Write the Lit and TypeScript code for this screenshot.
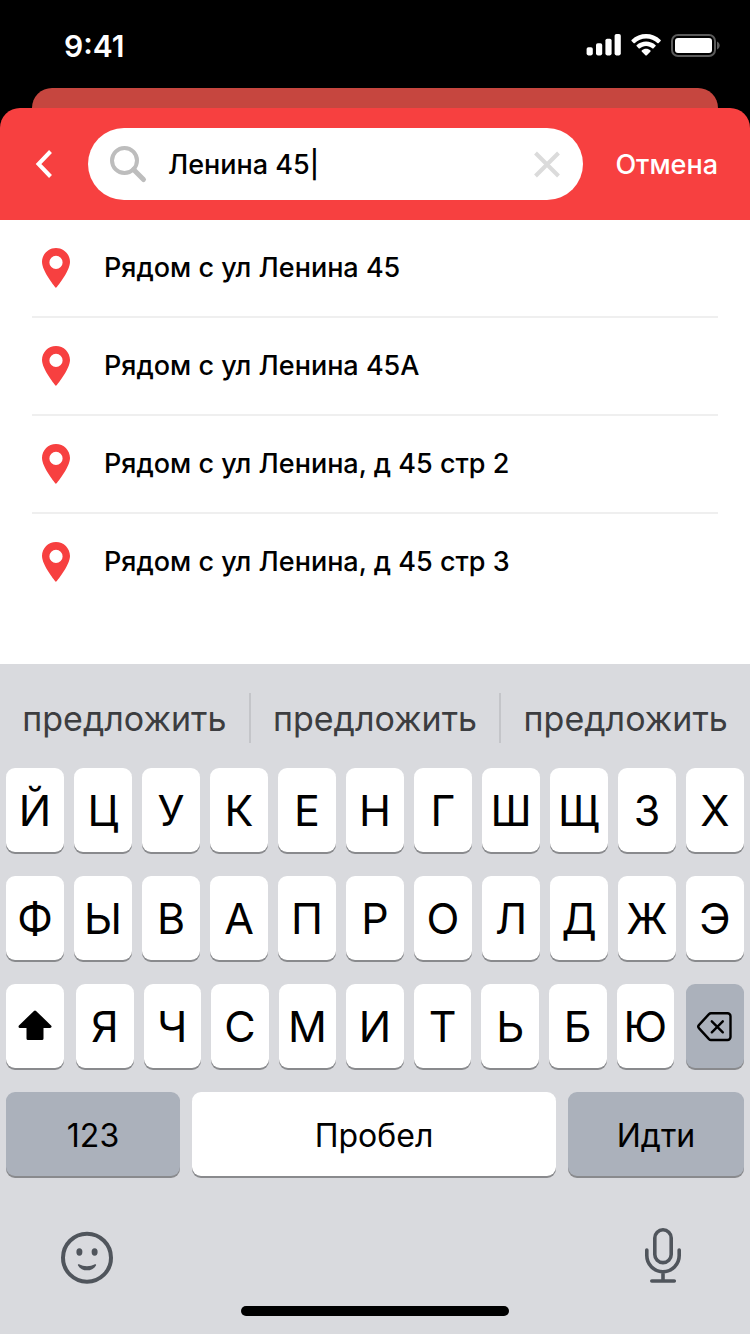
import { LitElement, html, css, svg } from "lit";
import { customElement, property, state } from "lit/decorators.js";
import { classMap } from "lit/directives/class-map.js";

@customElement("status-bar")
class StatusBar extends LitElement {
  static styles = css`
    :host {
      display: flex;
      align-items: center;
      justify-content: space-between;
      height: 88px;
      padding: 3px 30px 0 64px;
      box-sizing: border-box;
      color: #fff;
    }
    .time {
      font-size: 30px;
      line-height: 36px;
      font-weight: 600;
    }
    .indicators {
      display: block;
    }
  `;

  render() {
    return html`
      <span class="time">9:41</span>
      <svg class="indicators" width="134" height="24" viewBox="0 0 134 24" fill="#fff" aria-hidden="true">
        <rect x="0.6" y="13.2" width="6.2" height="8.2" rx="1.8" />
        <rect x="10" y="9.2" width="6.2" height="12.2" rx="1.8" />
        <rect x="19.4" y="4.8" width="6.2" height="16.6" rx="1.8" />
        <rect x="28.6" y="0" width="6.2" height="21.4" rx="1.8" />
        <path d="M60.1 4.6c4.3 0 8.4 1.7 11.5 4.6.25.2.6.2.85 0l2.2-2.3c.25-.25.25-.65 0-.9-8.1-7.9-21-7.9-29.1 0-.25.25-.25.65 0 .9l2.2 2.3c.25.2.6.2.85 0 3.1-2.9 7.2-4.6 11.5-4.6z" />
        <path d="M60.1 11.9c2.4 0 4.6.9 6.4 2.5.25.25.6.25.85 0l2.3-2.3c.25-.25.25-.65 0-.9-5.4-5-13.7-5-19.1 0-.25.25-.25.65 0 .9l2.3 2.3c.25.25.6.25.85 0 1.8-1.6 4-2.5 6.4-2.5z" />
        <path d="M64.5 17.4c.25-.25.25-.65 0-.9-2.5-2.2-6.3-2.2-8.8 0-.25.25-.25.65 0 .9l3.9 4c.25.25.75.25 1 0z" />
        <rect x="86" y="1" width="43" height="21" rx="6" fill="none" stroke="#5b5b5b" stroke-width="2" />
        <rect x="89" y="4" width="37" height="15" rx="3" />
        <path d="M131 7.5v8c1.6-.7 2.7-2.2 2.7-4s-1.100-3.300-2.700-4z" fill="#5b5b5b" />
      </svg>
    `;
  }
}

@customElement("search-header")
class SearchHeader extends LitElement {
  @property() query = "";

  static styles = css`
    :host {
      display: block;
    }
    .behind {
      height: 20px;
      margin: 0 32px;
      border-radius: 20px 20px 0 0;
      background: #c6463f;
    }
    .bar {
      display: flex;
      align-items: center;
      padding: 20px 32px;
      border-radius: 20px 20px 0 0;
      background: #f74040;
    }
    button {
      display: block;
      margin: 0;
      padding: 0;
      border: 0;
      background: none;
      font: inherit;
      color: #fff;
      cursor: pointer;
    }
    svg {
      display: block;
    }
    .back {
      width: 24px;
      margin-right: 32px;
    }
    .field {
      display: flex;
      flex: 1;
      min-width: 0;
      align-items: center;
      height: 72px;
      box-sizing: border-box;
      padding: 0 20px;
      border-radius: 36px;
      background: #fff;
    }
    .text {
      flex: 1;
      min-width: 0;
      height: 40px;
      margin: 0 16px 0 20px;
      padding: 0;
      border: 0;
      outline: 0;
      background: none;
      color: #000;
      font: inherit;
      font-size: 27px;
      font-weight: 500;
    }
    .cancel {
      margin: 2px 0 0 32px;
      font-size: 27px;
      line-height: 36px;
      font-weight: 500;
    }
  `;

  private change(query: string) {
    this.dispatchEvent(new CustomEvent("query-change", { detail: query }));
  }

  render() {
    return html`
      <div class="behind"></div>
      <header class="bar">
        <button class="back" aria-label="Назад">
          <svg width="24" height="32" viewBox="0 0 24 32" fill="none" stroke="#fff" stroke-width="4">
            <path d="M18.5 3.5 6.5 16l12 12.500" />
          </svg>
        </button>
        <label class="field">
          <svg width="40" height="40" viewBox="0 0 40 40" fill="none" stroke="#bdbdbd">
            <circle cx="16.5" cy="16.5" r="12.5" stroke-width="4" />
            <path d="m25.500 25.500 10 10" stroke-width="5" stroke-linecap="round" />
          </svg>
          <input
            class="text"
            type="text"
            aria-label="Адрес"
            .value=${this.query}
            @input=${(e: Event) => this.change((e.target as HTMLInputElement).value)}
          />
          <button aria-label="Очистить" @click=${() => this.change("")}>
            <svg width="30" height="30" viewBox="0 0 30 30" stroke="#dbdbdb" stroke-width="4">
              <path d="m2.500 4 23 23m0-23-23 23" />
            </svg>
          </button>
        </label>
        <button class="cancel">Отмена</button>
      </header>
    `;
  }
}

@customElement("result-list")
class ResultList extends LitElement {
  @property({ attribute: false }) items: string[] = [];

  static styles = css`
    :host {
      display: block;
      background: #fff;
    }
    .list {
      margin: 0;
      padding: 0 32px;
      list-style: none;
    }
    .item + .item {
      border-top: 2px solid #efefef;
    }
    .link {
      display: flex;
      align-items: center;
      gap: 24px;
      height: 96px;
      color: #000;
      text-decoration: none;
      font-size: 27px;
      line-height: 32px;
      font-weight: 500;
    }
    .pin {
      flex: none;
    }
  `;

  render() {
    return html`
      <ul class="list">
        ${this.items.map(
          (item) => html`
            <li class="item">
              <a class="link" href="#">
                <svg class="pin" width="48" height="40" viewBox="0 0 48 40" aria-hidden="true">
                  <path
                    fill="#f74040"
                    fill-rule="evenodd"
                    d="M24 0C16.3 0 10 6.2 10 14c0 9.5 14 26 14 26s14-16.5 14-26C38 6.2 31.7 0 24 0zm0 7.8a6.6 6.6 0 1 1 0 13.2 6.6 6.6 0 0 1 0-13.2z"
                  />
                </svg>
                <span>${item}</span>
              </a>
            </li>
          `
        )}
      </ul>
    `;
  }
}

const shiftIcon = svg`
  <path d="M18 4 33 18.5H25V30.5H11V18.5H3z" fill="#000" stroke="#000" stroke-width="3" stroke-linejoin="round" />
`;

const deleteIcon = svg`
  <g fill="none" stroke="#000" stroke-width="2.4" stroke-linecap="round" stroke-linejoin="round">
    <path d="M14 5.200H30.500a3 3 0 0 1 3 3V29a3 3 0 0 1-3 3H14a3 3 0 0 1-2-.9L2.100 20.400a2.600 2.600 0 0 1 0-3.600L12 6.100a3 3 0 0 1 2-.9z" />
    <path d="m14.800 13.300 11 11m0-11-11 11" />
  </g>
`;

@customElement("screen-keyboard")
class ScreenKeyboard extends LitElement {
  static styles = css`
    :host {
      display: block;
      background: #d9dade;
      color: #000;
    }
    button {
      display: block;
      min-width: 0;
      margin: 0;
      padding: 0;
      border: 0;
      background: none;
      font: inherit;
      color: inherit;
      cursor: pointer;
    }
    svg {
      display: block;
    }
    .suggestions {
      display: flex;
      align-items: center;
      height: 104px;
      padding-top: 4px;
      box-sizing: border-box;
    }
    .suggestion {
      flex: 1;
      height: 50px;
      padding-top: 2px;
      font-size: 34px;
      line-height: 48px;
      color: #3c3d40;
    }
    .suggestion + .suggestion {
      border-left: 2px solid #c4c5c9;
    }
    .rows {
      display: flex;
      flex-direction: column;
      gap: 24px;
      padding: 0 6px;
    }
    .row {
      display: flex;
      gap: 10px;
    }
    .row.spaced {
      gap: 12px;
    }
    .letters {
      display: flex;
      flex: 598 1 0;
      gap: 10px;
    }
    .key {
      display: flex;
      flex: 1 1 0;
      align-items: center;
      justify-content: center;
      height: 84px;
      border-radius: 9px;
      background: #fff;
      box-shadow: 0 2px 0 #898a8d;
      font-size: 43px;
      line-height: 52px;
    }
    .key.side {
      flex-grow: 58;
    }
    .key.wide {
      padding-top: 3px;
      box-sizing: border-box;
      font-size: 32px;
    }
    .key.mode {
      flex-grow: 174;
    }
    .key.space {
      flex-grow: 364;
    }
    .key.go {
      flex-grow: 176;
    }
    .key.dark {
      background: #abb1bb;
    }
    .tools {
      display: flex;
      align-items: center;
      justify-content: space-between;
      height: 68px;
      margin-top: 48px;
      padding: 0 60px;
    }
    .home {
      width: 268px;
      height: 10px;
      margin: 14px auto 0;
      border-radius: 5px;
      background: #000;
    }
    .end {
      height: 18px;
    }
  `;

  private press(value: string) {
    this.dispatchEvent(new CustomEvent("key-press", { detail: value }));
  }

  private key(label: string, value = label, kinds: Record<string, boolean> = {}) {
    return html`<button class=${classMap({ key: true, ...kinds })} @click=${() => this.press(value)}>${label}</button>`;
  }

  render() {
    return html`
      <div class="suggestions">
        ${["предложить", "предложить", "предложить"].map(
          (word) => html`<button class="suggestion">${word}</button>`
        )}
      </div>
      <div class="rows">
        <div class="row">${[..."ЙЦУКЕНГШЩЗХ"].map((c) => this.key(c))}</div>
        <div class="row">${[..."ФЫВАПРОЛДЖЭ"].map((c) => this.key(c))}</div>
        <div class="row spaced">
          <button class="key side" aria-label="Регистр">
            <svg width="36" height="36" viewBox="0 0 36 36">${shiftIcon}</svg>
          </button>
          <div class="letters">${[..."ЯЧСМИТЬБЮ"].map((c) => this.key(c))}</div>
          <button class="key side dark" aria-label="Удалить" @click=${() => this.press("delete")}>
            <svg width="36" height="36" viewBox="0 0 36 36">${deleteIcon}</svg>
          </button>
        </div>
        <div class="row spaced">
          ${this.key("123", "", { wide: true, mode: true, dark: true })}
          ${this.key("Пробел", " ", { wide: true, space: true })}
          ${this.key("Идти", "", { wide: true, go: true, dark: true })}
        </div>
      </div>
      <div class="tools">
        <button aria-label="Эмодзи">
          <svg width="54" height="54" viewBox="0 0 54 54" fill="#50555c">
            <circle cx="27" cy="26.700" r="24" fill="none" stroke="#50555c" stroke-width="4" />
            <ellipse cx="19.400" cy="21" rx="3" ry="3.700" />
            <ellipse cx="34.600" cy="21" rx="3" ry="3.700" />
            <path d="M19.100 33.300c4.700 2.600 11.100 2.600 15.800 0 .8-.4 1.500.3 1.100 1.100-3.800 6.600-14.200 6.600-18 0-.4-.8.3-1.500 1.100-1.100z" />
          </svg>
        </button>
        <button aria-label="Диктовка">
          <svg width="54" height="60" viewBox="0 0 54 60" fill="none" stroke="#50555c" stroke-width="3.6" stroke-linecap="round">
            <rect x="18.800" y="1.800" width="16.400" height="32.800" rx="8.200" />
            <path d="M10.800 22v5.500a16.200 16.200 0 0 0 32.400 0V22M27 44v8M15.800 53h22.500" />
          </svg>
        </button>
      </div>
      <div class="home"></div>
      <div class="end"></div>
    `;
  }
}

@customElement("app-root")
class AppRoot extends LitElement {
  @state() private query = "Ленина 45|";

  static styles = css`
    :host {
      display: flex;
      flex-direction: column;
      min-height: 100vh;
      background: #000;
      font-family: Inter, "Liberation Sans", sans-serif;
    }
    .results {
      flex: 1;
    }
  `;

  private results = [
    "Рядом с ул Ленина 45",
    "Рядом с ул Ленина 45А",
    "Рядом с ул Ленина, д 45 стр 2",
    "Рядом с ул Ленина, д 45 стр 3",
  ];

  private press(value: string) {
    const text = this.query.replace(/\|$/, "");
    this.query = (value === "delete" ? text.slice(0, -1) : text + value) + "|";
  }

  render() {
    return html`
      <status-bar></status-bar>
      <search-header
        .query=${this.query}
        @query-change=${(e: CustomEvent<string>) => (this.query = e.detail)}
      ></search-header>
      <result-list class="results" .items=${this.results}></result-list>
      <screen-keyboard @key-press=${(e: CustomEvent<string>) => this.press(e.detail)}></screen-keyboard>
    `;
  }
}
